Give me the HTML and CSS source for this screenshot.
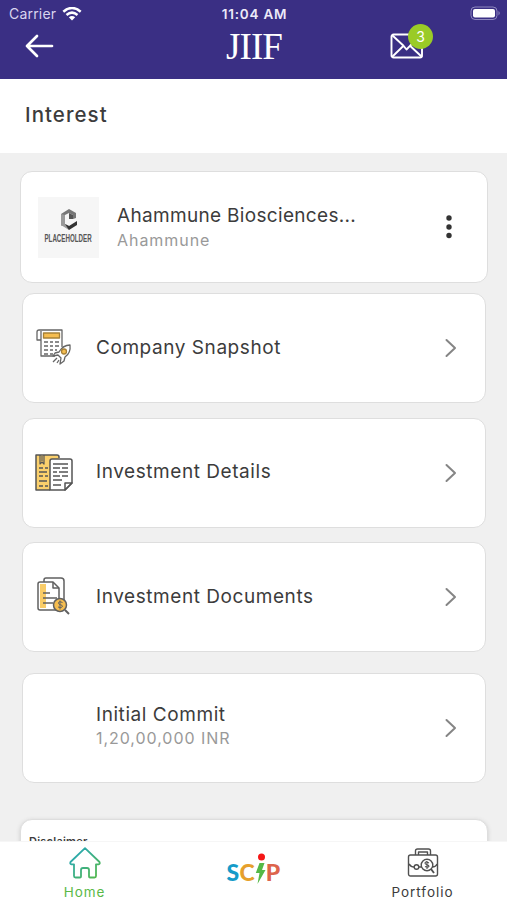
FILE: index.html
```html
<!DOCTYPE html>
<html lang="en">
<head>
<meta charset="utf-8">
<title>Interest</title>
<link rel="stylesheet" href="styles.css">
</head>
<body>
<div class="app">
  <header class="header">
    <div class="status">
      <div class="carrier"><span class="carrier-name">Carrier</span>
        <svg width="20" height="14" viewBox="0 0 20 14" fill="none" stroke="#fff" stroke-width="2.5"><path d="M1.3 4.8Q10-2.8 18.7 4.800M4.500 8Q10 3.200 15.500 8"/><path d="M6.800 10.300Q10 7.600 13.200 10.300L10 13.600z" fill="#fff" stroke="none"/></svg>
      </div>
      <span class="time">11:04 AM</span>
      <svg class="battery" width="31" height="15" viewBox="0 0 31 15"><rect x="1" y="1" width="26" height="12.5" rx="4" fill="none" stroke="#8f88bf"/><rect x="3" y="3" width="22" height="8.5" rx="2" fill="#fff"/><path d="M28.500 5q2.500 2.200 0 4.500z" fill="#8f88bf"/></svg>
    </div>
    <div class="toolbar">
      <svg class="back" width="29" height="24" viewBox="0 0 29 24" fill="none" stroke="#fff" stroke-width="2.7" stroke-linecap="round" stroke-linejoin="round"><path d="M27 12H2M12 2L2 12l10 10"/></svg>
      <span class="brand">JIIF</span>
      <div class="mail">
        <svg width="34" height="26" viewBox="0 0 34 26" fill="none" stroke="#fff" stroke-width="1.9" stroke-linejoin="round"><rect x="1.5" y="1.5" width="30.5" height="23" rx="2"/><path d="M2 2l11.500 10.800 3 3.700 3.500-3.700L32 2M2 24l11.500-11.200M32 24L20 12.800"/></svg>
        <span class="badge">3</span>
      </div>
    </div>
  </header>
  <h1 class="title">Interest</h1>
  <main class="content">
    <section class="card company">
      <div class="thumb">
        <svg width="18" height="22" viewBox="0 0 18 22"><path d="M9 0l7 4v5l-3 1V6L9 4 5 6v9L2 17l-1-1V5z" fill="#777"/><path d="M1 5l4 1v9l4 2v4l-8-5z" fill="#999"/><path d="M5 15l4 2 8-5v4l-8 5z" fill="#333"/><path d="M9 4l4 2v4H9z" fill="#555"/></svg>
        <span class="thumb-label">PLACEHOLDER</span>
      </div>
      <div class="text"><span class="name">Ahammune Biosciences...</span><span class="sub">Ahammune</span></div>
      <svg class="dots" width="6" height="24" viewBox="0 0 6 24" fill="#333"><circle cx="3" cy="3" r="2.7"/><circle cx="3" cy="12" r="2.7"/><circle cx="3" cy="20.5" r="2.7"/></svg>
    </section>
    <section class="card row">
      <svg class="icon" width="40" height="40" viewBox="0 0 40 40" fill="none" stroke="#666" stroke-width="1.3" stroke-linejoin="round"><path d="M6 12H2V4q0-2 2-2h23v17M6 3v25h14M6 4v8"/><rect x="8.500" y="5" width="16" height="5" fill="#f5bd50" stroke="#a78137"/><path d="M9 14h4m2 0h3m2 0h4M9 18h4m2 0h3m2 0h4M9 22h4m2 0h3m2 0h2M9 26h4m2 0h3" stroke-width="1.600"/><path d="M35 17q-7 0-11 7l-4 1-2 3 5-1 3 3-1 6 4-3 1-4q6-4 5-12z" fill="#fff"/><circle cx="29" cy="23.500" r="2.500" fill="#f5bd50" stroke="#a78137"/><path d="M18 34l4-4M22 35l2-3"/></svg>
      <span class="name">Company Snapshot</span>
      <svg class="chevron" viewBox="0 0 14 20"><path d="M2.500 2l8.500 8-8.500 8"/></svg>
    </section>
    <section class="card row">
      <svg class="icon" width="40" height="40" viewBox="0 0 40 40" fill="none" stroke="#555" stroke-width="1.5" stroke-linejoin="round"><path d="M24 5V4q0-2-2-2H1v35h14" fill="#fbd06c"/><path d="M5 2v9l2-2 2 2V2M7 3v5" stroke-width="1.200"/><path d="M4 15h4m2 0h3M4 19h8M4 23h4m2 0h3M4 28h8M4 33h4m2 0h3"/><path d="M17 6h18q2 0 2 2v22l-7 7H15V8q0-2 2-2z" fill="#fff"/><path d="M30 37v-7h7zM18 11h15M18 15h7m2 0h6M18 19h4m2 0h9M18 23h7m2 0h6M18 27h9M18 32h8"/></svg>
      <span class="name">Investment Details</span>
      <svg class="chevron" viewBox="0 0 14 20"><path d="M2.500 2l8.500 8-8.500 8"/></svg>
    </section>
    <section class="card row">
      <svg class="icon" width="40" height="40" viewBox="0 0 40 40" fill="none" stroke="#606060" stroke-width="1.5" stroke-linejoin="round"><path d="M9 5V3q0-2 2-2h15q3 0 3 3v22"/><path d="M5 5h13l6 6v22H5q-2 0-2-2V7q0-2 2-2z" fill="#fff"/><path d="M5 7h6v24H5z" fill="#f9cc68" stroke="none"/><path d="M18 5v6h6M8 16h7M8 21h14M8 26h10"/><circle cx="25" cy="28" r="6.500" fill="#f5bd50"/><path d="M30 33l4 4" stroke-width="2"/><path d="M27.500 25.500q-4-1.700-4 .7c0 2 4 1 4 3.300q-1 2-4.500.5M25 23.500v9" stroke-width="1"/></svg>
      <span class="name">Investment Documents</span>
      <svg class="chevron" viewBox="0 0 14 20"><path d="M2.500 2l8.500 8-8.500 8"/></svg>
    </section>
    <section class="card row commit">
      <div class="icon"></div>
      <div class="text"><span class="name">Initial Commit</span><span class="sub">1,20,00,000 INR</span></div>
      <svg class="chevron" viewBox="0 0 14 20"><path d="M2.500 2l8.500 8-8.500 8"/></svg>
    </section>
    <section class="card disclaimer">Disclaimer</section>
  </main>
  <nav class="tabs">
    <a class="tab home">
      <svg width="32" height="32" viewBox="0 0 32 32" fill="none" stroke="url(#g)" stroke-width="1.8" stroke-linejoin="round"><defs><linearGradient id="g" x2="1" y2="1"><stop stop-color="#20a5c5"/><stop offset="1" stop-color="#57b947"/></linearGradient></defs><path d="M16 1.200L1.500 15q-.8 2 1 2.300H5V29q0 1.500 1.500 1.500H11q1 0 1-1V23q0-2 2-2h4q2 0 2 2v6.500q0 1 1 1h4.500Q27 30.500 27 29V17.300h2.500q1.800-.3 1-2.300z"/></svg>
      <span>Home</span>
    </a>
    <a class="tab scip"><span class="s">S</span><span class="c">C</span><svg width="11" height="32" viewBox="0 0 11 32"><circle cx="6.500" cy="4" r="3.500" fill="#f51616"/><path d="M4.500 10h5L7 17h3.500L2.500 31l2-11H.8z" fill="#55b947"/></svg><span class="p">P</span></a>
    <a class="tab portfolio">
      <svg width="32" height="30" viewBox="0 0 32 30" fill="none" stroke="#505050" stroke-width="1.4" stroke-linejoin="round"><rect x="1.500" y="7" width="29" height="21" rx="2"/><path d="M8.500 7V3q0-2 2-2h11q2 0 2 2v4M11.500 7V4h9v3M2 16q2 3 5 3M12 19h3M25 19q4 0 5-3"/><circle cx="9.500" cy="19" r="2.300"/><circle cx="20" cy="17" r="5.800" fill="#fff"/><path d="M24 21l3 4" stroke-width="1.800"/><path d="M22 15q-4-2-4 .3c0 1.700 4 1 4 3q-1 1.700-4 .3M20 13v8" stroke-width="1.100"/></svg>
      <span>Portfolio</span>
    </a>
  </nav>
</div>
</body>
</html>
```
FILE: styles.css
```css
* { box-sizing: border-box; }
body { margin: 0; font-family: Inter, "Liberation Sans", sans-serif; color: #3c3c3c; }
svg { display: block; flex: none; }
.app { width: 507px; height: 900px; display: flex; flex-direction: column; overflow: hidden; background: #fff; }
.header { height: 79px; flex: none; background: #3a2f84; color: #fff; }
.status { height: 27px; padding: 0 5px 0 9px; display: grid; grid-template-columns: 1fr auto 1fr; align-items: center; }
.carrier { display: flex; align-items: center; gap: 6px; font-size: 14px; color: #d9d5ef; }
.carrier-name { letter-spacing: .2px; }
.time { font-size: 13.5px; font-weight: 600; letter-spacing: .8px; margin-left: -2px; color: #eceaf8; }
.battery { justify-self: end; margin-right: 1px; }
.toolbar { height: 42px; padding: 0 83px 0 25px; display: flex; align-items: center; }
.brand { margin: -3px 0 0 172px; font: 37px/38px "Liberation Serif", serif; letter-spacing: -.9px; }
.back { margin-top: -4px; }
.mail { position: relative; margin-left: auto; margin-top: -4px; }
.badge { position: absolute; right: -9px; top: -9px; width: 25px; height: 25px; border-radius: 50%; background: #9acb27; font-size: 14px; line-height: 25px; text-align: center; }
.title { margin: 0; height: 74px; flex: none; padding: 0 25px; font-size: 20.5px; font-weight: 500; line-height: 71px; letter-spacing: 1.05px; }
.content { flex: 1; min-height: 0; overflow: hidden; background: #f0f0f0; padding: 18px 21px 0 22px; display: flex; flex-direction: column; }
.card { flex: none; background: #fff; border: 1px solid #dedede; border-radius: 12px; display: flex; align-items: center; }
.company { height: 112px; margin: 0 -2px 10px; padding: 0 35px 0 17px; }
.thumb { width: 61px; height: 61px; background: #f6f6f6; display: flex; flex-direction: column; align-items: center; padding-top: 12px; gap: 1px; }
.thumb-label { font: bold 10px/14px "Liberation Sans", sans-serif; transform: scaleX(.62); color: #555; }
.company .text { margin-left: 18px; }
.company .name { letter-spacing: .32px; }
.text { display: flex; flex-direction: column; }
.name { font-size: 19px; line-height: 25px; letter-spacing: .56px; white-space: nowrap; }
.sub { font-size: 16px; line-height: 24px; letter-spacing: .95px; color: #999; white-space: nowrap; }
.dots { margin-left: auto; }
.row { height: 110px; margin-bottom: 14.700px; padding: 0 27px 0 12px; }
.row > .name { margin-top: -2px; }
.icon { width: 40px; height: 40px; margin-right: 21px; }
.chevron { width: 14px; height: 20px; margin-left: auto; fill: none; stroke: #858585; stroke-width: 2; stroke-linecap: round; stroke-linejoin: round; }
.commit { margin: 6px 0 35.900px; }
.commit .text { margin-top: -5px; }
.commit .sub { line-height: 22px; }
.disclaimer { height: 112px; margin: 0 -2px; padding: 14px 8px; align-items: flex-start; font-size: 11px; line-height: 14px; font-weight: 600; letter-spacing: .25px; box-shadow: 0 1px 4px #ccc; }
.tabs { height: 59px; flex: none; background: #fff; display: grid; grid-template-columns: repeat(3, 1fr); border-top: 1px solid #f6f6f6; }
.tab { display: flex; flex-direction: column; align-items: center; font-size: 13.5px; line-height: 18px; letter-spacing: .95px; }
.home { color: #5ab947; padding-top: 5px; gap: 4px; }
.portfolio { padding-top: 6px; gap: 5px; }
.scip { flex-direction: row; justify-content: center; align-items: flex-start; padding-top: 11px; font: 900 23px/39px Lato, sans-serif; letter-spacing: .3px; }
.s { color: #159bc9; }
.c { color: #e6a02c; }
.p { color: #dd644c; }
```
